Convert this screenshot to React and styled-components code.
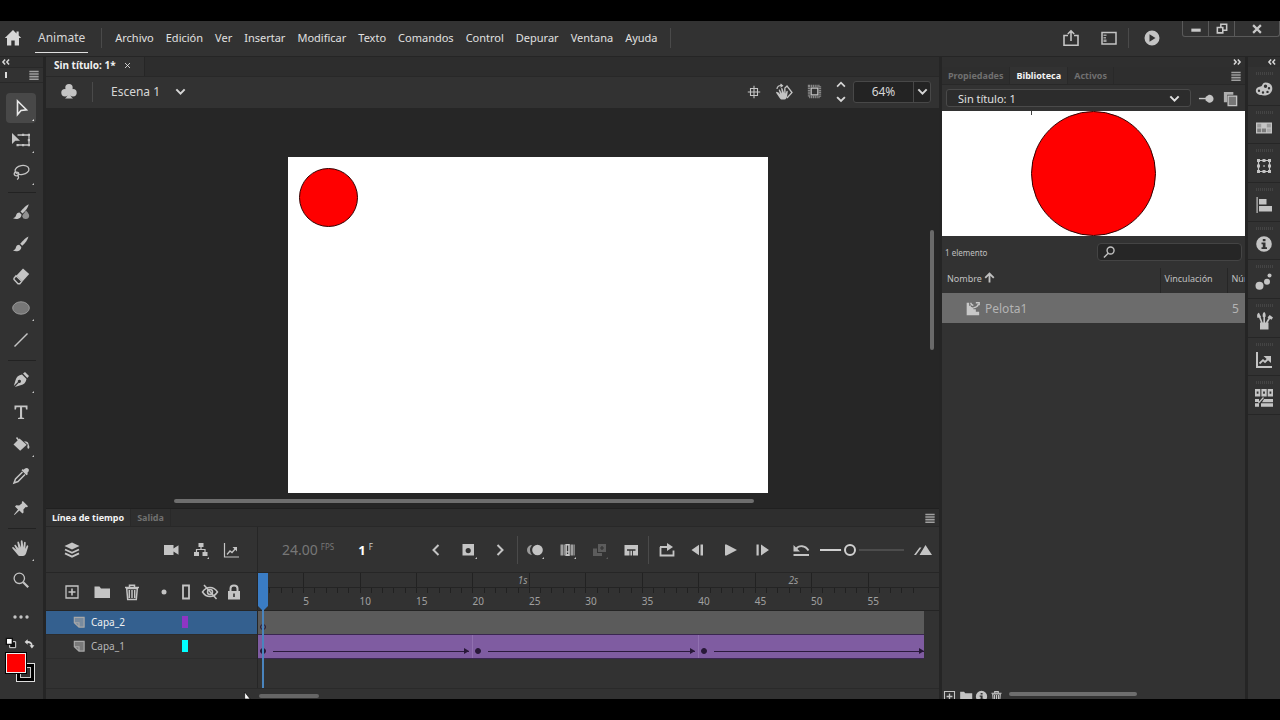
import React, { useState } from "react";
import styled, { createGlobalStyle, css } from "styled-components";

//Data
const menus = [
  "Archivo",
  "Edición",
  "Ver",
  "Insertar",
  "Modificar",
  "Texto",
  "Comandos",
  "Control",
  "Depurar",
  "Ventana",
  "Ayuda",
];

const toolGroups = [
  [
    { id: "select", label: "Selección", more: true },
    { id: "transform", label: "Transformación libre", more: true },
    { id: "lasso", label: "Lazo", more: true },
  ],
  [
    { id: "fluidBrush", label: "Pincel fluido" },
    { id: "brush", label: "Pincel" },
    { id: "eraser", label: "Borrador" },
    { id: "oval", label: "Óvalo", more: true },
    { id: "line", label: "Línea" },
  ],
  [
    { id: "pen", label: "Pluma", more: true },
    { id: "text", label: "Herramienta de texto" },
    { id: "bucket", label: "Cubo de pintura", more: true },
    { id: "dropper", label: "Cuentagotas" },
    { id: "pin", label: "Posición de activo" },
  ],
  [
    { id: "hand", label: "Mano", more: true },
    { id: "zoom", label: "Zoom" },
  ],
];

const dockItems = [
  { id: "palette", label: "Color" },
  { id: "swatches", label: "Muestras" },
  { id: "bounds", label: "Transformar" },
  { id: "align", label: "Alinear" },
  { id: "info", label: "Información" },
  { id: "presets", label: "Configuraciones de movimiento" },
  { id: "brushes", label: "Biblioteca de pinceles" },
  { id: "graph", label: "Editor de movimiento" },
  { id: "parts", label: "Mapa de fotogramas" },
];

const layers = [
  { name: "Capa_2", color: "#8f35c4", active: true },
  { name: "Capa_1", color: "#00ffff", active: false },
];

const totalFrames = 59;
const frames = Array.from({ length: totalFrames }, (_, i) => i + 1);
const tweens = [19, 20, 20];

//Icons, all on an 18 x 18 grid
const icons = {
  home: <path d="M9 1 .8 9H3v7.6h4.3v-5h3.4v5H15V9h2.2L14.7 6.500V2.500h-2.200v1.900z" />,
  share: (
    <g fill="none" stroke="currentColor" strokeWidth="1.600">
      <path d="M6 6.500H2v9.700h14V6.500h-4M9 12V2.300M5.800 5 9 1.800 12.200 5" />
    </g>
  ),
  workspace: (
    <>
      <path d="M2 3.500h14v11.500H2z" fill="none" stroke="currentColor" strokeWidth="1.500" />
      <path d="M3.500 5.500h3V7h-3zM3.500 8h2.500v1.500H3.500zM3.500 10.500h3V13h-3z" opacity=".75" />
    </>
  ),
  playCircle: (
    <path fillRule="evenodd" d="M9 1.500a7.500 7.500 0 1 0 0 15 7.500 7.500 0 0 0 0-15zM6.500 5.200l6 3.800-6 3.800z" />
  ),
  close: <path d="m4 4 10 10M14 4 4 14" stroke="currentColor" strokeWidth="1.600" />,
  closeBold: <path d="m4 4 10 10M14 4 4 14" stroke="currentColor" strokeWidth="2.800" />,
  minimize: <path d="M3 8.500h12v4H3z" />,
  restore: (
    <g fill="none" stroke="currentColor" strokeWidth="2">
      <path d="M3 7h7v7H3zM7.500 6V3H15v7.500h-4" />
    </g>
  ),
  club: (
    <>
      <circle cx="9" cy="4.800" r="3.700" />
      <circle cx="5" cy="9.800" r="3.700" />
      <circle cx="13" cy="9.800" r="3.700" />
      <path d="M8 8h2c0 4 .8 6 3 7.500H5c2.200-1.500 3-3.500 3-7.500z" />
    </>
  ),
  chevronDown: <path d="m4 6.500 5 5 5-5" fill="none" stroke="currentColor" strokeWidth="2.400" />,
  chevronUp: <path d="m4 11 5-5 5 5" fill="none" stroke="currentColor" strokeWidth="2.200" />,
  chevronLeft: <path d="m11.500 4-5 5 5 5" fill="none" stroke="currentColor" strokeWidth="2" />,
  chevronRight: <path d="m6.500 4 5 5-5 5" fill="none" stroke="currentColor" strokeWidth="2" />,
  doubleLeft: <path d="M7.500 4.500 3.500 9l4 4.500M14.500 4.500l-4 4.500 4 4.500" fill="none" stroke="currentColor" strokeWidth="2.800" />,
  doubleRight: <path d="m3.500 4.500 4 4.500-4 4.500M10.500 4.500l4 4.500-4 4.500" fill="none" stroke="currentColor" strokeWidth="2.800" />,
  bars: <path d="M3 3.500h12v2H3zM3 6.800h12v2H3zM3 10.100h12v2H3zM3 13.400h12v2H3z" />,
  center: (
    <g fill="none" stroke="currentColor" strokeWidth="1.400">
      <path d="M4.500 4.500h9v9h-9zM9 1v16M1 9h16" />
    </g>
  ),
  rotate: (
    <>
      <path d="M10.500 4.500 13 2l5 6.500-5 5.500" fill="none" stroke="currentColor" strokeWidth="1.300" transform="translate(-1 1)" />
      <path d="M3.500 9.500 1.500 8.700c-.8.500-.2 1.300.3 2l3 4.600c.6.900 1.200 1.200 2.200 1.200h2.500c1.500 0 2.200-1.500 2.500-3l.8-5c0-1-1.200-1-1.500 0l-.6 2.200L10.500 6c-.2-1-1.500-.8-1.400.2l.1 4L7.500 5.500c-.4-1-1.600-.5-1.300.4L7 10.500 5 7c-.6-.8-1.500-.2-1.200.6l1.400 4z" />
      <path d="M2 6c0-2.500 2-3.800 4.500-3.400M5.500 1l2 1.800-2 1.500" fill="none" stroke="currentColor" strokeWidth="1.200" />
    </>
  ),
  clip: (
    <>
      <path d="M2.500 2.500h13v13h-13z" fill="none" stroke="#888" strokeWidth="3" strokeDasharray="1.500 .7" />
      <path d="M5 5h8v8H5z" fill="none" stroke="currentColor" strokeWidth="1.500" />
    </>
  ),
  select: <path d="M5.500 2v13.500l3.500-4 5.500-.7z" fill="none" stroke="currentColor" strokeWidth="1.600" />,
  transform: (
    <>
      <path d="M0 2v11l3.300-3.200H8z" />
      <path d="M5.500 4h11.500v10H5.500" fill="none" stroke="currentColor" strokeWidth="1.300" />
      <path d="M4.500 13h2.200v2.200H4.500zM10 13h2.200v2.200H10zM15.800 13H18v2.200h-2.200zM15.800 2.800H18V5h-2.200zM10 2.800h2.200V5H10zM15.800 8H18v2.200h-2.200z" />
    </>
  ),
  lasso: (
    <g fill="none" stroke="currentColor" strokeWidth="1.300">
      <ellipse cx="10" cy="7" rx="7" ry="4.500" transform="rotate(-10 10 7)" />
      <ellipse cx="4.500" cy="11" rx="2.300" ry="1.800" />
      <path d="M5.500 12.500c1.500 1 1.500 3-.5 4" />
    </g>
  ),
  fluidBrush: (
    <>
      <path d="M16.800 1.200c-2 .8-6 4.300-8.300 7.300l2 2C13.500 8 16 4.500 16.800 1.200z" />
      <path d="M7.500 9.500c-2 0-3 1.300-3.500 3-.4 1.400-1.500 2.300-3 2.700 3.500 1.800 8.500.6 8.500-3.700z" />
      <path d="M14 7.500c2.500 2.500 3.200 4 3.200 5.500a3.600 3.600 0 0 1-7 .5c0-1.700 2.300-3.700 3.800-6z" opacity=".65" />
    </>
  ),
  brush: (
    <>
      <path d="M16.500 1.500c-2 .8-6 4.300-8.300 7.300l2 2C13.200 8.300 15.700 4.800 16.500 1.500z" />
      <path d="M7.200 9.800c-2 0-3 1.300-3.400 3-.4 1.400-1.300 2.300-2.800 2.700 3.500 1.800 8.300.6 8.300-3.500z" />
    </>
  ),
  eraser: (
    <>
      <path d="M11 1.500 17.200 7l-6.500 7.300L4.500 8.500z" />
      <path d="m4 8.800 5.800 5.500-2 2.400H6L2 12.500v-1.300z" fill="none" stroke="currentColor" strokeWidth="1.400" />
    </>
  ),
  oval: <ellipse cx="9" cy="9" rx="8.300" ry="6.200" fill="#777" stroke="#999" />,
  line: <path d="M2.500 15.500 15.500 2.500" stroke="currentColor" strokeWidth="1.500" />,
  pen: (
    <>
      <path fillRule="evenodd" d="M10 3.500 14.500 8c-.5 3.500-2.500 5.500-6 6.200L2.800 16l4-4.200a1.600 1.600 0 1 0-.9-.9L1.800 15l1.700-5.700C4.500 6 6.500 4 10 3.500z" />
      <path d="m11 2.600 2-1.600 4 4-1.700 2z" />
    </>
  ),
  text: <path d="M2.500 2.500h13V6.500h-1.500l-.4-2.200h-3.500V14.500l2 .4v1.100H6v-1.100l2-.4V4.300H4.400L4 6.500H2.500z" />,
  bucket: (
    <>
      <path d="m7.500 3.500 7.200 6.300-6.500 6L1.500 9.500z" />
      <path d="M9.500 9 4.500 2.500" stroke="currentColor" strokeWidth="1.500" />
      <path d="M12 6.300c3 0 4.700 1 4.700 3.500 1 1.500 1 4-.2 4s-1.500-2-.7-4z" />
    </>
  ),
  dropper: (
    <>
      <path d="m11.500 2.800 1.500-1.300c2.500-1.800 5 .7 3.400 3.200L15.200 6l.8 1-1.500 1.300-5-5L10.800 2z" />
      <path d="M10.500 5 3.500 12 2 16l4-1.500 7-7" fill="none" stroke="currentColor" strokeWidth="1.500" />
    </>
  ),
  pin: <path d="M10.800 2 16 7.200l-1 1-1.300-.1-2.300 2.500.2 2.800-1.200 1.200-3-3L2.500 16 2 15.500l4-5-3-3 1.200-1.200 3 .2L10 4.200 9.800 3z" />,
  hand: <path d="M4.600 11 1.500 8.200C.5 7.500-.3 8.700.5 9.500l5 6c.8 1 1.500 1.500 2.800 1.500h2.500c2 0 3-1.500 3.400-3l2-6.500c.3-1.300-1.200-1.600-1.600-.5l-1.300 3 .4-6.300c0-1.200-1.500-1.300-1.700-.1l-.6 5L10.500 2c-.1-1.200-1.700-1.100-1.700.1l.1 6.500L7 3.200c-.4-1.100-1.900-.6-1.600.5L6.500 9.500 3.800 6C3 5.100 1.900 6 2.500 6.900z" />,
  zoom: (
    <g fill="none" stroke="currentColor">
      <circle cx="7.300" cy="7.300" r="5.200" strokeWidth="1.300" />
      <path d="m11.200 11.200 5 5" strokeWidth="2.200" />
    </g>
  ),
  search: (
    <g fill="none" stroke="currentColor" strokeWidth="1.800">
      <circle cx="11" cy="7" r="4.500" />
      <path d="M8 10.500 2.500 16" />
    </g>
  ),
  dots: (
    <>
      <circle cx="3" cy="9" r="1.700" />
      <circle cx="9" cy="9" r="1.700" />
      <circle cx="15" cy="9" r="1.700" />
    </>
  ),
  defaults: (
    <>
      <path d="M7 7h9v9H7z" fill="#111" stroke="#ddd" strokeWidth="1.500" />
      <path d="M2 2h9v9H2z" fill="#fff" stroke="#111" strokeWidth="2" />
    </>
  ),
  swap: <path d="M1 6.500 6 2v3c5 0 8 3 8 7h3l-4 5-4-5h2.500C11.500 9.500 9.500 8 6 8v3z" />,
  palette: (
    <path
      fillRule="evenodd"
      d="M10.500 2.500C7 2.500 8 6 5.500 6.500 3 6.800.8 8 .8 10.800c0 3 3.500 4.700 8 4.700 5 0 8.500-3 8.500-7s-3-6-6.800-6zM4 9.500a1.200 1.200 0 1 1 0 2.400 1.200 1.200 0 0 1 0-2.400zm4 1.800a1.200 1.200 0 1 1 0 2.400 1.200 1.200 0 0 1 0-2.400zm4.500-.6a1.200 1.200 0 1 1 0 2.400 1.200 1.200 0 0 1 0-2.400zM14 7a1.200 1.200 0 1 1 0 2.400A1.200 1.200 0 0 1 14 7zm-3.500-2.500a1.700 1.700 0 1 1 0 3.400 1.700 1.700 0 0 1 0-3.400z"
    />
  ),
  swatches: (
    <>
      <path d="M1 3.500h16v11H1z" />
      <path d="M2.200 4.800h4v3.600h-4zM11.800 4.800h4v3.600h-4z" fill="#999" />
      <path d="M2.200 9.600h4v3.600h-4zM7 9.600h4v3.600H7z" fill="#7c7c7c" />
      <path d="M11.800 9.600h4v3.600h-4z" fill="#aaa" />
    </>
  ),
  bounds: (
    <>
      <path d="M3.500 3.500h11v11h-11z" fill="none" stroke="currentColor" strokeWidth="1.200" />
      <path d="M2 2h3v3H2zM7.500 2h3v3h-3zM13 2h3v3h-3zM2 7.500h3v3H2zM13 7.500h3v3h-3zM2 13h3v3H2zM7.500 13h3v3h-3zM13 13h3v3h-3zM8.300 8.300h1.500v1.500H8.300z" />
    </>
  ),
  align: <path d="M1.500 1h1.200v16H1.500zM4 3h7.500v5.500H4zM4 10h13v5.500H4z" />,
  info: (
    <path
      fillRule="evenodd"
      d="M9 1.200a7.800 7.800 0 1 0 0 15.600A7.800 7.800 0 0 0 9 1.200zM7.800 4h2.700v2.200H7.800zM6.500 7.500h4v4.700H12V14H6.500v-1.800h1.300V9.300H6.500z"
    />
  ),
  presets: (
    <>
      <circle cx="4.500" cy="12.800" r="4" />
      <circle cx="12" cy="8.700" r="3" />
      <circle cx="14.500" cy="2.500" r="2" />
    </>
  ),
  brushes: (
    <>
      <path d="M5 10.500h8.500v7H5z" />
      <path d="M7 11 4.300 4M9.200 11V3M11.500 11l3-5" stroke="currentColor" strokeWidth="1.700" />
      <path d="M2.500 6C1.500 3 2.500 1.200 4 .8L6 5zM7.800 5C7.300 2 8 1 9.200 0c1.100 1 1.800 2 1.200 5zM12.500 5.500 14.700 3 18 5.500l-1.500 2.200z" />
    </>
  ),
  graph: (
    <>
      <path d="M2 1v15H17" fill="none" stroke="currentColor" strokeWidth="2" />
      <path d="m4.500 12.500 3.500-3.300 2 1.800 3-3" fill="none" stroke="currentColor" strokeWidth="1.800" />
      <path d="M8.500 5h7.500v7z" />
    </>
  ),
  graphThin: (
    <>
      <path d="M2.500 2v14H17" fill="none" stroke="currentColor" strokeWidth="1.200" />
      <path d="m5 13.500 3-3.500 2 1.500L14 7" fill="none" stroke="currentColor" strokeWidth="1.300" />
      <path d="M10.500 6H15v4.500z" />
    </>
  ),
  parts: (
    <>
      <path fillRule="evenodd" d="M0 0h5.300v7.500H0zM6.400 0h5.300v7.500H6.400zM12.700 0H18v7.500h-5.300zM1.700 2.500v2.200h1.800V2.500zM8.100 2.500v2.200h1.800V2.500zM14.500 2.500v2.200h1.800V2.500z" />
      <path d="M0 10h4v3H0zM0 14.200h4v3.500H0zM9 10H18v3.200H7zM6 14.200H18v3.500H6z" />
      <path d="m3.500 14 5-5.500" stroke="currentColor" strokeWidth="1.200" />
    </>
  ),
  layers: (
    <>
      <path d="m9 1.500 7.500 3.500L9 8.500 1.500 5z" />
      <path d="m2 8.500 7 3.300 7-3.300M2 12.300l7 3.300 7-3.300" fill="none" stroke="currentColor" strokeWidth="1.900" />
    </>
  ),
  camera: <path d="M2 4h9.500v3.500L16.500 4.200v9.600L11.500 10.500V14H2z" />,
  hierarchy: (
    <>
      <path d="M6.500 2h5v4h-5zM2 11h5v4H2zM10.500 11h5v4h-5z" />
      <path d="M9 6v2.500M4.500 11V8.500H13V11" fill="none" stroke="currentColor" strokeWidth="1.200" />
    </>
  ),
  add: (
    <>
      <path d="M3 3h12v12H3z" fill="none" stroke="currentColor" strokeWidth="1.300" />
      <path d="M8.200 5.500h1.600v2.700h2.700v1.600H9.800v2.700H8.200V9.800H5.500V8.200h2.700z" />
    </>
  ),
  folder: <path d="M1.500 3.500h5L8 5.500h9V15H1.500z" />,
  trash: (
    <>
      <path d="M6.500 4V2.300h5V4M2 4.500h14" fill="none" stroke="currentColor" strokeWidth="1.500" />
      <path d="M3.700 5.500h10.600l-1 11H4.700zM6.300 7v8M9 7v8M11.700 7v8" fill="none" stroke="currentColor" strokeWidth="1.500" />
    </>
  ),
  dot: <circle cx="11" cy="9" r="2.500" />,
  outline: <path d="M6 2.500h6v13H6z" fill="none" stroke="currentColor" strokeWidth="1.800" />,
  eyeOff: (
    <g fill="none" stroke="currentColor" strokeWidth="1.500">
      <path d="M1.500 9c4-6 11-6 15 0-4 6-11 6-15 0z" />
      <circle cx="9" cy="9" r="2.500" />
      <path d="m3 2 12.500 14" />
    </g>
  ),
  lock: (
    <>
      <path fillRule="evenodd" d="M3 8h12v8.500H3zM8.200 10.500h1.600v3.500H8.200z" />
      <path d="M5.500 8.500V5.500c0-4 7-4 7 0v3" fill="none" stroke="currentColor" strokeWidth="2" />
    </>
  ),
  key: <path fillRule="evenodd" d="M3.500 3h11.500v11.500H3.500zM9.200 7a2.600 2.600 0 1 0 0 5.200 2.600 2.600 0 0 0 0-5.200z" />,
  onion: (
    <>
      <path d="M6 4a5 5 0 0 0 0 10 8 8 0 0 1 0-10z" opacity=".7" />
      <circle cx="11.500" cy="9" r="5.300" />
    </>
  ),
  multiFrames: (
    <>
      <path d="M2.500 3.500h3v11h-3zM12.500 3.500h3v11h-3z" opacity=".75" />
      <path d="M6.200 3.500h.8v11h-.8zM15.900 3.500h.8v11h-.8z" opacity=".75" />
      <path fillRule="evenodd" d="M7.300 3h4.500v12H7.300zM8.900 4.500v5.700h1.300V4.500zM8.900 11.500V13h1.300v-1.500z" />
    </>
  ),
  insertTween: (
    <>
      <path d="M8 3h8v8H8z" />
      <path d="M3 7.500h4v4.500h5v3H3z" />
      <path d="M12 5v4M10 7h4" stroke="#333" strokeWidth="1.200" />
    </>
  ),
  blankKey: (
    <path fillRule="evenodd" d="M2.500 4h13.500v10.500h-5V9.700h2.500V8.200H5v1.500h2.500v4.800h-5zM8.400 9.700h1.700v4.800H8.400z" />
  ),
  loop: (
    <>
      <path d="M3.500 6v8.500h13V9.500M3 6h8" fill="none" stroke="currentColor" strokeWidth="1.800" />
      <path d="m10 2 6 4-6 4z" />
    </>
  ),
  stepBack: <path d="M2.500 9 10 3.800v10.400zM11.500 3.500H14v11h-2.500z" />,
  play: <path d="M4 3.500h1.500L16 9 5.500 14.500H4z" />,
  stepForward: <path d="M3.500 3.500h2.200v11H3.500zM8 3.500 16 9l-8 5.500z" />,
  undo: (
    <>
      <path d="M1.500 13h15.500v1.900H1.500zM1.500 4v6.500h6.500z" />
      <path d="M4 8c3-4 9-4 12.500 1.500" fill="none" stroke="currentColor" strokeWidth="1.900" />
    </>
  ),
  peaks: <path d="M11.500 4 18 14H5.500zM0 14l5.500-7.500h2L2 14z" />,
  layerPage: (
    <>
      <path d="M3 3h13v12.500H9L3 10z" opacity=".6" />
      <path d="M3 3h12.500v12.500H9L3 10zM3 10h6v5.500" fill="none" stroke="currentColor" strokeWidth="1.500" />
    </>
  ),
  graphic: (
    <>
      <path d="M2 2h3v4l2-1v2l3 1v2h3v3h4v4H2z" />
      <path d="M7 2c0 2 1 3 3 3M10 8c3 0 5-1 6-4M13 2h4v3" fill="none" stroke="currentColor" strokeWidth="1.700" />
    </>
  ),
  pushPin: (
    <>
      <path d="M1 8.300h9v1.500H1z" />
      <path d="M8 7.500 11.500 5a4.300 4.300 0 1 1 0 8.500L8 11z" />
    </>
  ),
  newPanel: (
    <>
      <path d="M2 2h10v3H5.500v8H2z" opacity=".85" />
      <path d="M6.500 6.500h9v10h-9z" fill="#777" stroke="currentColor" strokeWidth="1.400" />
    </>
  ),
  arrowUp: <path d="M9 17V3.500M2 9.500l7-7 7 7" fill="none" stroke="currentColor" strokeWidth="3" />,
};

const Icon = ({ name, size = 18 }) => (
  <svg
    width={size}
    height={size}
    viewBox="0 0 18 18"
    fill="currentColor"
    aria-hidden="true"
  >
    {icons[name]}
  </svg>
);

const Tool = ({ id, label, more, ...rest }) => (
  <IconButton aria-label={label} $more={more} {...rest}>
    <Icon name={id} />
  </IconButton>
);

function MenuBar() {
  return (
    <Header>
      <PlainButton aria-label="Inicio">
        <Icon name="home" />
      </PlainButton>
      <Brand href="#animate">Animate</Brand>
      <BarLine />
      <Menus>
        {menus.map((menu) => (
          <button key={menu}>{menu}</button>
        ))}
      </Menus>
      <BarLine />
      <HeaderActions>
        <IconButton aria-label="Compartir" $w={38}>
          <Icon name="share" />
        </IconButton>
        <IconButton aria-label="Espacio de trabajo" $w={38}>
          <Icon name="workspace" />
        </IconButton>
        <BarLine />
        <IconButton aria-label="Probar película" $w={46}>
          <Icon name="playCircle" />
        </IconButton>
      </HeaderActions>
      <WindowButtons>
        <button aria-label="Minimizar">
          <Icon name="minimize" size={14} />
        </button>
        <button aria-label="Restaurar">
          <Icon name="restore" size={14} />
        </button>
        <button aria-label="Cerrar">
          <Icon name="closeBold" size={14} />
        </button>
      </WindowButtons>
    </Header>
  );
}

function Toolbar() {
  const [tool, setTool] = useState("select");
  return (
    <ToolColumn>
      <CollapseRow $left>
        <Icon name="doubleLeft" size={10} />
      </CollapseRow>
      <ToolHead>
        <i />
        <Icon name="bars" size={14} />
      </ToolHead>
      {toolGroups.map((group) => (
        <ToolGroup key={group[0].id}>
          {group.map((item) => (
            <Tool
              key={item.id}
              {...item}
              $boxed
              $on={item.id === tool}
              onClick={() => setTool(item.id)}
            />
          ))}
        </ToolGroup>
      ))}
      <IconButton aria-label="Más herramientas" $h={42}>
        <Icon name="dots" />
      </IconButton>
      <SwatchTools>
        <PlainButton aria-label="Blanco y negro">
          <Icon name="defaults" size={12} />
        </PlainButton>
        <PlainButton aria-label="Intercambiar colores">
          <Icon name="swap" size={11} />
        </PlainButton>
      </SwatchTools>
      <Swatches>
        <StrokeSwatch aria-label="Color de trazo" />
        <FillSwatch aria-label="Color de relleno" />
      </Swatches>
    </ToolColumn>
  );
}

function Stage() {
  return (
    <>
      <DocTabs>
        <DocTab>
          Sin título: 1*
          <PlainButton aria-label="Cerrar documento">
            <Icon name="close" size={9} />
          </PlainButton>
        </DocTab>
      </DocTabs>
      <EditBar>
        <IconButton aria-label="Símbolos" $w={46}>
          <Icon name="club" />
        </IconButton>
        <BarLine />
        <SceneSelect>
          <select aria-label="Escena" defaultValue="1">
            <option value="1">Escena 1</option>
          </select>
          <Icon name="chevronDown" size={15} />
        </SceneSelect>
        <IconButton aria-label="Centrar escenario" $w={31}>
          <Icon name="center" size={14} />
        </IconButton>
        <IconButton aria-label="Girar" $w={30}>
          <Icon name="rotate" />
        </IconButton>
        <IconButton aria-label="Recortar contenido" $w={30}>
          <Icon name="clip" size={15} />
        </IconButton>
        <Stepper>
          <PlainButton aria-label="Acercar">
            <Icon name="chevronUp" size={14} />
          </PlainButton>
          <PlainButton aria-label="Alejar">
            <Icon name="chevronDown" size={14} />
          </PlainButton>
        </Stepper>
        <ZoomBox>
          <input aria-label="Nivel de zoom" defaultValue="64%" />
          <PlainButton aria-label="Opciones de zoom">
            <Icon name="chevronDown" size={15} />
          </PlainButton>
        </ZoomBox>
      </EditBar>
      <Pasteboard>
        <Canvas>
          <Ball />
        </Canvas>
        <ScrollV />
        <ScrollH />
      </Pasteboard>
    </>
  );
}

function Ruler() {
  return (
    <RulerBox>
      <FrameGrid $h={14}>
        {frames
          .filter((n) => n % 5 === 0)
          .map((n) => (
            <MajorTick key={n} style={{ gridColumn: n }} />
          ))}
        <Second style={{ gridColumn: "24 / span 2" }}>1s</Second>
        <Second style={{ gridColumn: "48 / span 2" }}>2s</Second>
      </FrameGrid>
      <FrameGrid $h={6} $line>
        {frames.map((n) => (
          <Tick key={n} />
        ))}
      </FrameGrid>
      <FrameGrid $h={17}>
        {frames
          .filter((n) => n % 5 === 0)
          .map((n) => (
            <FrameNumber key={n} style={{ gridColumn: `${n} / span 3` }}>
              {n}
            </FrameNumber>
          ))}
      </FrameGrid>
    </RulerBox>
  );
}

function Timeline() {
  const [scale, setScale] = useState(34);
  return (
    <TimelinePanel>
      <PanelTabs>
        <PanelTab $on>Línea de tiempo</PanelTab>
        <PanelTab>Salida</PanelTab>
        <PanelMenu aria-label="Menú del panel">
          <Icon name="bars" size={14} />
        </PanelMenu>
      </PanelTabs>
      <TimelineGrid>
        <LayerBar $h={46}>
          <Tool id="layers" label="Vista de capas" $w={30} />
          <Push />
          <Tool id="camera" label="Cámara" $w={30} />
          <Tool id="hierarchy" label="Jerarquía" $w={30} more />
          <Tool id="graphThin" label="Gráfico" $w={30} />
        </LayerBar>
        <PlayBar>
          <Rates>
            <b>24.00</b>
            <sup>FPS</sup>
            <strong>1</strong>
            <sup className="frame">F</sup>
          </Rates>
          <Tool id="chevronLeft" label="Fotograma clave anterior" />
          <Tool id="key" label="Insertar fotograma clave" more />
          <Tool id="chevronRight" label="Fotograma clave siguiente" />
          <BarLine $tight />
          <Tool id="onion" label="Papel cebolla" more />
          <Tool id="multiFrames" label="Editar varios fotogramas" more />
          <Tool id="insertTween" label="Crear interpolación" more disabled />
          <Tool id="blankKey" label="Insertar fotograma" />
          <BarLine $tight />
          <Tool id="loop" label="Bucle" />
          <Tool id="stepBack" label="Retroceder" />
          <Tool id="play" label="Reproducir" />
          <Tool id="stepForward" label="Avanzar" />
          <Push />
          <Tool id="undo" label="Restablecer zoom" />
          <Range
            type="range"
            aria-label="Zoom de línea de tiempo"
            value={scale}
            onChange={(e) => setScale(e.target.value)}
          />
          <Tool id="peaks" label="Ajustar a la vista" />
        </PlayBar>
        <LayerBar $h={38}>
          <Tool id="add" label="Nueva capa" $w={30} />
          <Tool id="folder" label="Nueva carpeta" $w={30} />
          <Tool id="trash" label="Eliminar" $w={30} />
          <Push />
          <Tool id="dot" label="Resaltar" $w={24} />
          <Tool id="outline" label="Contorno" $w={24} />
          <Tool id="eyeOff" label="Ocultar" $w={24} />
          <Tool id="lock" label="Bloquear" $w={24} />
        </LayerBar>
        <TrackArea>
          <Ruler />
          <Track $gray>
            <Tween style={{ gridColumn: "1 / -1" }}>
              <KeyDot $empty />
            </Tween>
          </Track>
          <Track>
            {tweens.map((length, i) => (
              <Tween key={i} style={{ gridColumn: `span ${length}` }}>
                <KeyDot />
                <Arrow $last={i === tweens.length - 1} />
              </Tween>
            ))}
          </Track>
          <Playhead />
        </TrackArea>
        <LayerList>
          {layers.map((layer) => (
            <LayerRow key={layer.name} $active={layer.active}>
              <Icon name="layerPage" size={14} />
              <span>{layer.name}</span>
              <LayerColor style={{ background: layer.color }} />
            </LayerRow>
          ))}
        </LayerList>
      </TimelineGrid>
      <TimelineFoot>
        <svg width="8" height="9" viewBox="0 0 8 9" aria-hidden="true">
          <path d="M1 0v9h7z" fill="#fff" stroke="#000" strokeWidth=".8" />
        </svg>
        <i />
      </TimelineFoot>
    </TimelinePanel>
  );
}

function Library() {
  return (
    <LibraryPanel>
      <CollapseRow>
        <Icon name="doubleRight" size={10} />
      </CollapseRow>
      <PanelTabs>
        <PanelTab $slim>Propiedades</PanelTab>
        <PanelTab $slim $on>
          Biblioteca
        </PanelTab>
        <PanelTab $slim>Activos</PanelTab>
        <PanelMenu aria-label="Menú del panel">
          <Icon name="bars" size={14} />
        </PanelMenu>
      </PanelTabs>
      <DocRow>
        <DocSelect>
          <select aria-label="Documento" defaultValue="1">
            <option value="1">Sin título: 1</option>
          </select>
          <Icon name="chevronDown" size={15} />
        </DocSelect>
        <PlainButton aria-label="Fijar biblioteca">
          <Icon name="pushPin" size={17} />
        </PlainButton>
        <PlainButton aria-label="Nuevo panel de biblioteca">
          <Icon name="newPanel" size={17} />
        </PlainButton>
      </DocRow>
      <Preview>
        <Ball $big />
      </Preview>
      <SearchRow>
        <span>1 elemento</span>
        <SearchBox>
          <Icon name="search" size={14} />
          <input aria-label="Buscar en la biblioteca" />
        </SearchBox>
      </SearchRow>
      <Items>
        <thead>
          <tr>
            <th>
              Nombre <Icon name="arrowUp" size={11} />
            </th>
            <th>Vinculación</th>
            <th>Núm.</th>
          </tr>
        </thead>
        <tbody>
          <tr>
            <td>
              <Icon name="graphic" size={15} />
              Pelota1
            </td>
            <td />
            <td>5</td>
          </tr>
        </tbody>
      </Items>
      <LibraryFoot>
        <PlainButton aria-label="Nuevo símbolo">
          <Icon name="add" size={15} />
        </PlainButton>
        <PlainButton aria-label="Nueva carpeta">
          <Icon name="folder" size={14} />
        </PlainButton>
        <PlainButton aria-label="Propiedades del símbolo">
          <Icon name="info" size={13} />
        </PlainButton>
        <PlainButton aria-label="Eliminar símbolo">
          <Icon name="trash" size={13} />
        </PlainButton>
        <i />
      </LibraryFoot>
    </LibraryPanel>
  );
}

function Dock() {
  return (
    <DockColumn>
      <CollapseRow>
        <Icon name="doubleLeft" size={10} />
      </CollapseRow>
      <DockList>
        {dockItems.map((item) => (
          <DockButton key={item.id} aria-label={item.label}>
            <i />
            <Icon name={item.id} />
          </DockButton>
        ))}
      </DockList>
    </DockColumn>
  );
}

function App() {
  return (
    <>
      <GlobalStyle />
      <Page>
        <MenuBar />
        <Workspace>
          <Toolbar />
          <Main>
            <Stage />
            <Timeline />
          </Main>
          <Library />
          <Dock />
        </Workspace>
      </Page>
    </>
  );
}

const GlobalStyle = createGlobalStyle`
  * {
    margin: 0;
    padding: 0;
    box-sizing: border-box;
  }
  body {
    background: #000;
    color: #d6d6d6;
    font-family: "Noto Sans", "Open Sans", sans-serif;
    font-size: 11px;
  }
  button, input, select {
    font: inherit;
    color: inherit;
    background: none;
    border: none;
    outline: none;
  }
  svg {
    display: block;
    flex: none;
  }
`;

const Page = styled.div`
  min-height: 100vh;
  padding: 21px 0;
  display: flex;
  flex-direction: column;
`;

const PlainButton = styled.button`
  display: flex;
  align-items: center;
  justify-content: center;
`;

const IconButton = styled.button`
  position: relative;
  flex: none;
  width: ${(p) => p.$w || 32}px;
  height: ${(p) => p.$h || 32}px;
  display: flex;
  align-items: center;
  justify-content: center;
  color: #c4c4c4;
  &:disabled {
    color: #5c5c5c;
  }
  ${(p) =>
    p.$boxed &&
    css`
      border: 1px solid transparent;
      background-clip: padding-box;
      border-radius: 5px;
    `}
  ${(p) =>
    p.$on &&
    css`
      background-color: #484848;
      color: #e8e8e8;
    `}
  ${(p) =>
    p.$more &&
    css`
      &::after {
        content: "";
        position: absolute;
        right: ${p.$boxed ? 2 : 7}px;
        bottom: ${p.$boxed ? 2 : 7}px;
        border: 1px solid currentColor;
        border-top-color: transparent;
        border-left-color: transparent;
      }
    `}
`;

const BarLine = styled.i`
  flex: none;
  width: 1px;
  height: ${(p) => (p.$tight ? 28 : 20)}px;
  margin: ${(p) => (p.$tight ? "0 1px" : "0")};
  background: #4a4a4a;
`;

const Push = styled.span`
  flex: 1;
`;

//Menu bar
const Header = styled.header`
  height: 35px;
  display: flex;
  align-items: center;
  background: #323232;
  padding: 0 0 2px 4px;
`;

const Brand = styled.a`
  align-self: stretch;
  margin: 0 13px 1px 13px;
  padding: 0 3px;
  border-bottom: 1px solid #e0e0e0;
  color: inherit;
  font-size: 12px;
  line-height: 34px;
  text-decoration: none;
`;

const Menus = styled.nav`
  display: flex;
  gap: 12px;
  padding: 0 12px 1px 13px;
  color: #e0e0e0;
`;

const HeaderActions = styled.div`
  display: flex;
  align-items: center;
  margin: 0 7px 0 auto;
`;

const WindowButtons = styled.div`
  align-self: flex-start;
  display: flex;
  height: 16px;
  border: 1px solid #5a5a5a;
  border-top: none;
  border-radius: 0 0 3px 3px;
  button {
    width: 26px;
    display: flex;
    align-items: center;
    justify-content: center;
    border-right: 1px solid #5a5a5a;
    color: #c8c8c8;
  }
  button:last-child {
    width: 44px;
    border: none;
  }
`;

const Workspace = styled.div`
  flex: 1;
  display: grid;
  grid-template-columns: 43px minmax(0, 1fr) 303px 32px;
  column-gap: 3px;
  padding: 1px 0 0;
  background: #252525;
`;

const CollapseRow = styled.div`
  height: 10px;
  display: flex;
  align-items: center;
  justify-content: ${(p) => (p.$left ? "flex-start" : "flex-end")};
  padding: 0 3px 0 1px;
  background: #2f2f2f;
`;

//Tools
const ToolColumn = styled.aside`
  display: flex;
  flex-direction: column;
  padding-bottom: 16px;
  background: #323232;
  > button {
    margin-left: 5px;
  }
`;

const ToolHead = styled.div`
  display: flex;
  align-items: center;
  justify-content: space-between;
  height: 16px;
  margin-bottom: 9px;
  padding: 0 2px 0 5px;
  border-top: 1px solid #282828;
  border-bottom: 1px solid #282828;
  color: #a0a0a0;
  i {
    width: 2px;
    height: 6px;
    background: #ddd;
  }
`;

const ToolGroup = styled.div`
  display: flex;
  flex-direction: column;
  padding-left: 5px;
  & + & {
    margin-top: 4px;
    padding-top: 4px;
    background: linear-gradient(#222, #222) 8px 0 / 28px 1px no-repeat;
  }
`;

const SwatchTools = styled.div`
  display: flex;
  justify-content: space-between;
  height: 10px;
  padding: 0 8px 0 5px;
`;

const Swatches = styled.div`
  display: grid;
  grid-template-columns: 10px 10px 9px;
  grid-template-rows: 10px 10px 9px;
  margin: 5px 0 0 6px;
`;

const FillSwatch = styled.button`
  grid-area: 1 / 1 / 3 / 3;
  background: #f00;
  border: 1px solid #eee;
  outline: 1px solid #000;
`;

const StrokeSwatch = styled.button`
  grid-area: 2 / 2 / 4 / 4;
  background: #323232;
  border: 1px solid #ddd;
  box-shadow: inset 0 0 0 3px #000, inset 0 0 0 4px #ccc;
`;

//Stage
const Main = styled.main`
  display: flex;
  flex-direction: column;
  min-width: 0;
`;

const DocTabs = styled.div`
  display: flex;
  height: 19px;
  background: #2d2d2d;
`;

const DocTab = styled.div`
  display: flex;
  align-items: center;
  gap: 7px;
  padding: 0 12px 3px 8px;
  border-right: 1px solid #262626;
  background: #323232;
  color: #f0f0f0;
  font-size: 10px;
  font-weight: bold;
`;

const EditBar = styled.div`
  display: flex;
  align-items: center;
  height: 32px;
  padding: 0 8px 2px 0;
  border-top: 1px solid #282828;
  background: #323232;
`;

const SceneSelect = styled.label`
  display: flex;
  align-items: center;
  gap: 12px;
  margin-right: auto;
  padding-left: 18px;
  font-size: 12px;
  select {
    appearance: none;
  }
`;

const Stepper = styled.div`
  width: 24px;
  display: flex;
  flex-direction: column;
  align-items: center;
`;

const ZoomBox = styled.div`
  display: flex;
  height: 22px;
  border: 1px solid #484848;
  border-radius: 3px;
  background: #232323;
  font-size: 12px;
  input {
    width: 60px;
    text-align: center;
    border-right: 1px solid #484848;
  }
  button {
    width: 16px;
  }
`;

const Pasteboard = styled.section`
  flex: 1;
  display: grid;
  grid-template-columns: 3fr 480px 2fr 9px;
  grid-template-rows: 1fr 15px;
  padding-top: 49px;
  background: #262626;
`;

const Canvas = styled.div`
  grid-column: 2;
  min-height: 335px;
  padding: 11px;
  background: #fff;
`;

const Ball = styled.div`
  width: ${(p) => (p.$big ? 125 : 59)}px;
  height: ${(p) => (p.$big ? 125 : 59)}px;
  border: 1px solid #300;
  border-radius: 50%;
  background: #f00;
`;

const ScrollV = styled.i`
  grid-column: 4;
  width: 4px;
  height: 120px;
  margin-top: 73px;
  border-radius: 2px;
  background: #6a6a6a;
`;

const ScrollH = styled.i`
  grid-column: 1 / -1;
  width: 65%;
  height: 4px;
  margin: 6px 0 0 128px;
  border-radius: 2px;
  background: #6e6e6e;
`;

//Timeline
const TimelinePanel = styled.section`
  border-top: 1px solid #202020;
  background: #323232;
`;

const PanelTabs = styled.div`
  display: flex;
  height: 18px;
  border-bottom: 1px solid #282828;
  background: #2e2e2e;
`;

const PanelTab = styled.button`
  padding: 0 ${(p) => (p.$slim ? 6 : 6)}px;
  border-right: 1px solid #292929;
  background: ${(p) => (p.$on ? "#323232" : "none")};
  color: ${(p) => (p.$on ? "#f4f4f4" : "#707070")};
  font-size: 9px;
  font-weight: bold;
`;

const PanelMenu = styled.button`
  margin-left: auto;
  padding-right: 2px;
  color: #a0a0a0;
`;

const TimelineGrid = styled.div`
  display: grid;
  grid-template-columns: 212px minmax(0, 1fr);
  grid-template-rows: 46px 38px auto;
`;

const LayerBar = styled.div`
  display: flex;
  align-items: center;
  height: ${(p) => p.$h}px;
  padding: 0 11px;
  border-right: 1px solid #262626;
  border-bottom: 1px solid #262626;
`;

const PlayBar = styled.div`
  display: flex;
  align-items: center;
  border-bottom: 1px solid #262626;
`;

const Rates = styled.div`
  flex: none;
  display: flex;
  align-items: flex-start;
  width: 162px;
  padding-left: 24px;
  font-size: 14px;
  line-height: 18px;
  b {
    color: #777;
    font-weight: normal;
  }
  strong {
    margin-left: 24px;
    font-size: 13px;
    color: #fff;
  }
  sup {
    padding-left: 3px;
    color: #777;
    font-size: 8px;
    line-height: 12px;
  }
  .frame {
    color: #ccc;
  }
`;

const Range = styled.input`
  appearance: none;
  width: 84px;
  height: 18px;
  margin: 0 3px 0 3px;
  &::-webkit-slider-runnable-track {
    height: 2px;
    background: linear-gradient(90deg, #d0d0d0 34%, #4c4c4c 34%);
  }
  &::-webkit-slider-thumb {
    appearance: none;
    width: 12px;
    height: 12px;
    margin-top: -5px;
    border: 2px solid #d0d0d0;
    border-radius: 50%;
    background: #323232;
    box-shadow: 0 0 0 3px #323232;
  }
`;

const LayerList = styled.ul`
  grid-area: 3 / 1;
  min-height: 77px;
  border-right: 1px solid #262626;
  list-style: none;
`;

const LayerRow = styled.li`
  display: flex;
  align-items: center;
  height: 24px;
  padding: 0 69px 1px 26px;
  border-bottom: 1px solid #2c2c2c;
  background: ${(p) => (p.$active ? "#34608f" : "none")};
  color: ${(p) => (p.$active ? "#f0f0f0" : "#b8b8b8")};
  font-size: 10px;
  span {
    flex: 1;
    padding-left: 5px;
  }
  svg {
    color: #a8a8a8;
  }
`;

const LayerColor = styled.i`
  width: 6px;
  height: 12px;
`;

const TrackArea = styled.div`
  grid-area: 2 / 2 / 4 / 3;
  position: relative;
`;

const RulerBox = styled.div`
  height: 38px;
  border-bottom: 1px solid #242424;
`;

const FrameGrid = styled.div`
  display: grid;
  grid-template-columns: repeat(59, minmax(0, 1fr));
  height: ${(p) => p.$h}px;
  padding-right: 15px;
  border-top: ${(p) => (p.$line ? "1px solid #242424" : "none")};
`;

const MajorTick = styled.i`
  grid-row: 1;
  border-left: 1px solid #222;
`;

const Tick = styled.i`
  border-left: 1px solid #212121;
`;

const Second = styled.em`
  grid-row: 1;
  color: #999;
  font-size: 10px;
  line-height: 14px;
`;

const FrameNumber = styled.span`
  grid-row: 1;
  color: #a0a0a0;
  font-size: 10px;
  line-height: 17px;
`;

const Track = styled.div`
  display: grid;
  grid-template-columns: repeat(59, minmax(0, 1fr));
  height: 24px;
  margin-right: 15px;
  border-bottom: 1px solid #3a2750;
  background: ${(p) => (p.$gray ? "#5b5b5b" : "#7f5ca1")};
`;

const Tween = styled.div`
  display: flex;
  align-items: center;
  padding: 9px 0 0 2px;
  & + & {
    border-left: 1px solid #9070b0;
  }
`;

const KeyDot = styled.i`
  width: 6px;
  height: 6px;
  border: 1px solid #281838;
  border-radius: 50%;
  background: ${(p) => (p.$empty ? "none" : "#281838")};
`;

const Arrow = styled.i`
  flex: 1;
  display: flex;
  align-items: center;
  justify-content: flex-end;
  height: 7px;
  margin: 0 ${(p) => (p.$last ? 0 : 3)}px 0 7px;
  background: linear-gradient(#2c1a3e, #2c1a3e) 0 3px / 100% 1px no-repeat;
  &::after {
    content: "";
    border: 3px solid transparent;
    border-left: 5px solid #281838;
    border-right: none;
  }
`;

const Playhead = styled.i`
  position: absolute;
  top: 0;
  bottom: 0;
  left: 0;
  width: 10px;
  background: linear-gradient(#4a84bd, #4a84bd) 50% 0 / 2px 100% no-repeat;
  &::before {
    content: "";
    display: block;
    height: 37px;
    background: #3a7cc4;
    clip-path: polygon(0 0, 100% 0, 100% 33px, 60% 100%, 40% 100%, 0 33px);
  }
`;

const TimelineFoot = styled.div`
  display: grid;
  grid-template-columns: 213px 60px;
  height: 11px;
  border-top: 1px solid #2a2a2a;
  svg {
    justify-self: end;
    margin: 3px 8px 0 0;
    height: 7px;
  }
  i {
    height: 4px;
    margin-top: 5px;
    border-radius: 2px;
    background: #666;
  }
`;

//Library
const LibraryPanel = styled.section`
  display: flex;
  flex-direction: column;
  min-width: 0;
  background: #323232;
`;

const DocRow = styled.div`
  display: flex;
  align-items: center;
  gap: 7px;
  height: 26px;
  padding: 0 6px 0 4px;
  color: #c4c4c4;
`;

const DocSelect = styled.label`
  flex: 1;
  display: flex;
  align-items: center;
  height: 18px;
  padding: 0 8px 0 11px;
  border: 1px solid #4a4a4a;
  border-radius: 3px;
  background: #2c2c2c;
  color: #e0e0e0;
  select {
    flex: 1;
    appearance: none;
  }
`;

const Preview = styled.div`
  display: flex;
  justify-content: center;
  background: linear-gradient(#444, #444) 89px 0 / 1px 4px no-repeat, #fff;
`;

const SearchRow = styled.div`
  display: flex;
  align-items: center;
  justify-content: space-between;
  height: 32px;
  padding: 0 3px;
  color: #c0c0c0;
  font-size: 8px;
`;

const SearchBox = styled.label`
  display: flex;
  align-items: center;
  width: 145px;
  height: 18px;
  padding-left: 4px;
  border: 1px solid #444;
  border-radius: 4px;
  background: #262626;
  input {
    min-width: 0;
    flex: 1;
  }
`;

const Items = styled.table`
  width: 100%;
  table-layout: fixed;
  border-collapse: collapse;
  th {
    height: 25px;
    padding: 0 0 5px 5px;
    color: #c0c0c0;
    font-size: 9px;
    font-weight: normal;
    text-align: left;
    white-space: nowrap;
    overflow: hidden;
  }
  th svg {
    display: inline-block;
    vertical-align: -1px;
  }
  th + th {
    border-left: 1px solid #262626;
    padding-left: 4px;
  }
  th:nth-child(2) {
    width: 67px;
  }
  th:nth-child(3) {
    width: 18px;
  }
  td {
    height: 30px;
    background: #6c6c6c;
    color: #b4b4b4;
    font-size: 12px;
  }
  td:first-child {
    padding-left: 23px;
  }
  td svg {
    display: inline-block;
    margin-right: 5px;
    vertical-align: -3px;
    color: #c8c8c8;
  }
  td:last-child {
    padding-left: 5px;
  }
`;

const LibraryFoot = styled.div`
  display: flex;
  align-items: center;
  gap: 2px;
  height: 10px;
  margin-top: auto;
  overflow: hidden;
  color: #c4c4c4;
  button {
    height: 14px;
    align-self: flex-start;
  }
  i {
    width: 128px;
    height: 4px;
    margin-left: 4px;
    border-radius: 2px;
    background: #6e6e6e;
  }
`;

//Dock
const DockColumn = styled.aside`
  background: #323232;
`;

const DockList = styled.div`
  display: flex;
  flex-direction: column;
  height: 348px;
`;

const DockButton = styled.button`
  flex: 1;
  display: flex;
  flex-direction: column;
  align-items: center;
  gap: 5px;
  padding-top: 5px;
  border-bottom: 1px solid #262626;
  color: #c4c4c4;
  i {
    width: 17px;
    height: 3px;
    background: repeating-linear-gradient(90deg, #444 0 1px, #323232 1px 2px);
  }
`;

export default App;
